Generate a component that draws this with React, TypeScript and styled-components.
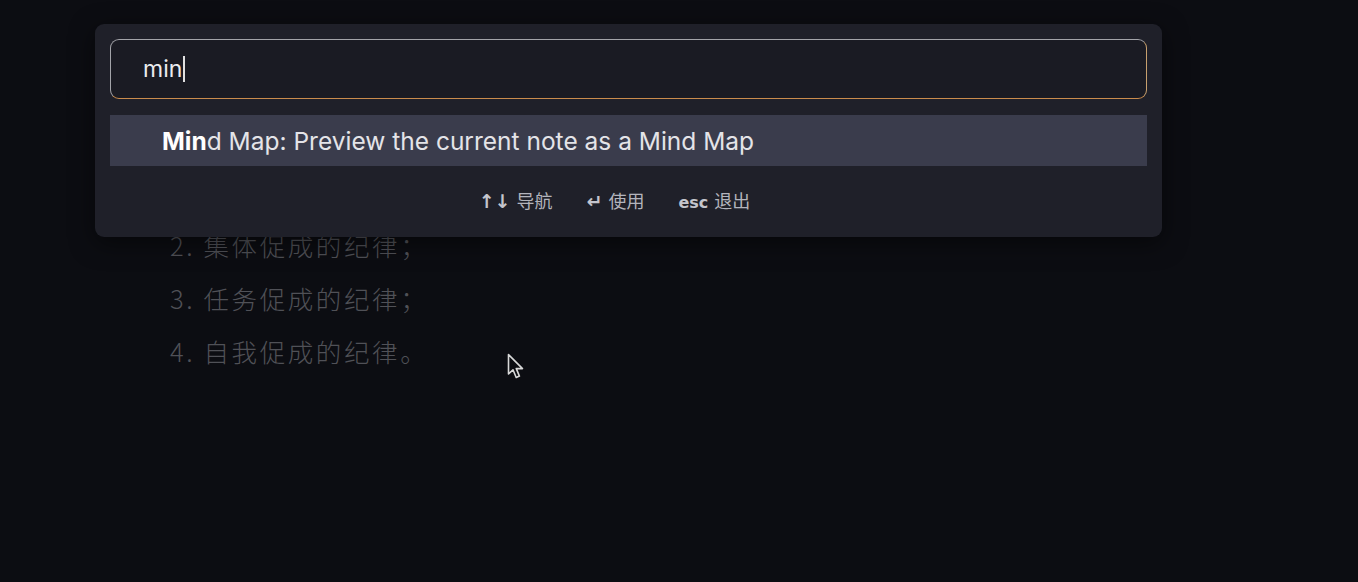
import React from 'react';
import styled, { createGlobalStyle } from 'styled-components';

const GlobalStyle = createGlobalStyle`
  html, body {
    margin: 0;
    padding: 0;
    background: #0c0d12;
  }

  body {
    font-family: Inter, "Liberation Sans", "Noto Sans CJK SC", sans-serif;
    overflow: hidden;
  }
`;

const Screen = styled.div`
  position: relative;
  width: 1358px;
  height: 582px;
  background: #0c0d12;
  overflow: hidden;
`;

const NoteBody = styled.ol`
  margin: 0;
  padding: 218px 0 0 170px;
  list-style: none;

  li {
    height: 53px;
    line-height: 53px;
    font-size: 25.5px;
    font-weight: 300;
    color: #505157;
    font-family: "Noto Sans CJK SC", "Noto Sans", sans-serif;
    letter-spacing: 2.6px;
  }
`;

const Palette = styled.div`
  position: absolute;
  top: 24px;
  left: 95px;
  width: 1067px;
  height: 213px;
  box-sizing: border-box;
  padding: 15px 15px 0;

  border-radius: 9px;
  background: #1f2029;
  box-shadow: 0 6px 24px rgba(0, 0, 0, 0.5);
`;

const SearchField = styled.div`
  display: flex;
  align-items: center;
  height: 60px;
  box-sizing: border-box;
  padding: 0 32px;

  border: 1.5px solid #a3a4a9;
  border-bottom-color: #c98b4c;
  border-right-color: #c7a06e;
  border-radius: 9px;
  background: #1a1b23;

  span {
    font-size: 23px;
    color: #ececef;
  }

  .caret {
    width: 1.5px;
    height: 26px;
    margin-left: 1px;
    background: #e0e0e0;
  }
`;

const ResultRow = styled.div`
  display: flex;
  align-items: center;
  height: 51px;
  margin-top: 16px;
  padding-left: 52px;

  background: #3a3c4c;
  font-size: 24.5px;
  color: #e4e4e8;

  b {
    font-weight: 700;
    color: #ffffff;
  }
`;

const HintBar = styled.div`
  display: flex;
  justify-content: center;
  gap: 34px;
  margin-top: 21px;
  padding-right: 28px;

  font-family: "Noto Sans CJK SC", Inter, sans-serif;
  font-size: 18px;
  color: #b3b4bc;
`;

const Hint = styled.span<{ $big?: boolean }>`
  display: flex;
  align-items: baseline;
  gap: 6px;

  kbd {
    font-family: "DejaVu Sans", "Liberation Sans", sans-serif;
    font-weight: 700;
    font-size: ${({ $big }) => ($big ? 19 : 16)}px;
    color: #c4c5cc;
  }
`;

const Pointer = styled.svg`
  position: absolute;
  top: 353px;
  left: 507px;
`;

export default function App() {
  return (
    <Screen>
      <GlobalStyle />
      <NoteBody>
        <li>2. 集体促成的纪律；</li>
        <li>3. 任务促成的纪律；</li>
        <li>4. 自我促成的纪律。</li>
      </NoteBody>

      <Palette>
        <SearchField>
          <span>min</span>
          <div className="caret" />
        </SearchField>

        <ResultRow>
          <span>
            <b>Min</b>d Map: Preview the current note as a Mind Map
          </span>
        </ResultRow>

        <HintBar>
          <Hint $big>
            <kbd>↑↓</kbd>导航
          </Hint>
          <Hint $big>
            <kbd>↵</kbd>使用
          </Hint>
          <Hint>
            <kbd>esc</kbd>退出
          </Hint>
        </HintBar>
      </Palette>

      <Pointer width="20" height="28" viewBox="0 0 20 28">
        <path
          d="M1.5 1.5 L1.5 21 L6 16.8 L9.2 24.5 L12.4 23.1 L9.3 15.6 L15.5 15.6 Z"
          fill="#0c0d12"
          stroke="#d8d8d8"
          strokeWidth="1.6"
          strokeLinejoin="round"
        />
      </Pointer>
    </Screen>
  );
}
